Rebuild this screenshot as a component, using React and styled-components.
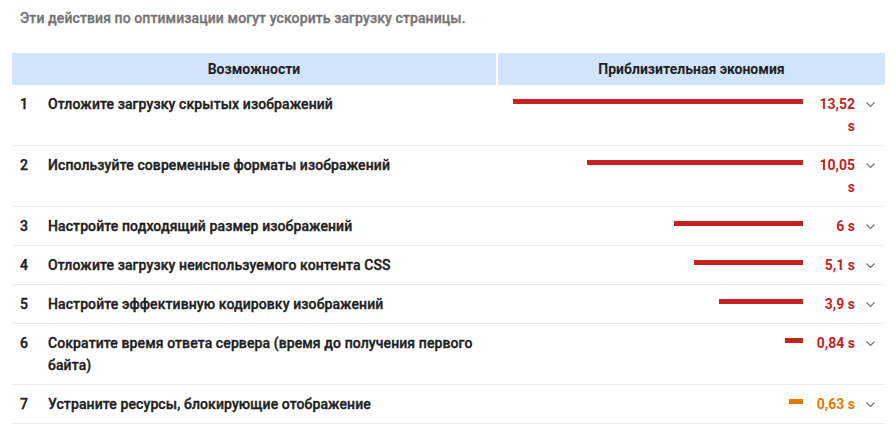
import React from "react";
import styled, { createGlobalStyle } from "styled-components";

const GlobalStyle = createGlobalStyle`
  body {
    margin: 0;
    background: #ffffff;
    font-family: Roboto, "Liberation Sans", Arial, sans-serif;
  }
`;

// no medium Roboto face here, so thicken the regular one a little
const medium = `
  font-weight: 500;
  letter-spacing: 0.1px;
  -webkit-text-stroke: 0.35px currentColor;
`;

const Page = styled.div`
  width: 873px;
  padding: 8px 0 0 12px;
`;

const Intro = styled.div`
  ${medium}
  padding-left: 8px;
  font-size: 14px;
  line-height: 20px;
  color: #757575;
  margin-bottom: 25px;
`;

const HeaderRow = styled.div`
  display: grid;
  grid-template-columns: 484px 387px;
  column-gap: 2px;
`;

const HeaderCell = styled.div`
  background: #d2e3fc;
  height: 32px;
  display: flex;
  align-items: center;
  justify-content: center;
  font-size: 14px;
  font-weight: 700;
  color: #212121;
`;

const Row = styled.div`
  ${medium}
  display: grid;
  grid-template-columns: 36px 1fr 387px;
  padding: 8px 0;
  border-bottom: 1px solid #ebebeb;
  font-size: 14px;
  line-height: 22px;
  color: #212121;
`;

const Num = styled.div`
  padding-left: 8px;
`;

const Label = styled.div`
  padding-right: 20px;
`;

const Savings = styled.div`
  display: flex;
  align-items: flex-start;
`;

const BarTrack = styled.div`
  flex: 1;
  display: flex;
  justify-content: flex-end;
`;

const Bar = styled.div`
  height: 5px;
  margin-top: 6px;
  background: ${({ $tone }) => ($tone === "warn" ? "#e67700" : "#c5221f")};
`;

const Value = styled.div`
  width: 44px;
  margin-left: 8px;
  text-align: right;
  font-weight: 700;
  letter-spacing: 0;
  -webkit-text-stroke: 0;
  color: ${({ $tone }) => ($tone === "warn" ? "#e67700" : "#c5221f")};
`;

const Chevron = styled.div`
  width: 30px;
  height: 22px;
  display: flex;
  align-items: center;
  justify-content: center;
  color: #757575;
`;

const items = [
  { id: 1, label: "Отложите загрузку скрытых изображений", value: 13.52, text: "13,52 s" },
  { id: 2, label: "Используйте современные форматы изображений", value: 10.05, text: "10,05 s" },
  { id: 3, label: "Настройте подходящий размер изображений", value: 6, text: "6 s" },
  { id: 4, label: "Отложите загрузку неиспользуемого контента CSS", value: 5.1, text: "5,1 s" },
  { id: 5, label: "Настройте эффективную кодировку изображений", value: 3.9, text: "3,9 s" },
  { id: 6, label: "Сократите время ответа сервера (время до получения первого байта)", value: 0.84, text: "0,84 s" },
  { id: 7, label: "Устраните ресурсы, блокирующие отображение", value: 0.63, text: "0,63 s", tone: "warn" },
];

const PX_PER_SECOND = 290 / 13.52;

const ChevronIcon = () => (
  <svg width="9" height="5" viewBox="0 0 9 5">
    <path d="M0.5 0.5l4 4 4-4" fill="none" stroke="currentColor" strokeWidth="1.2" />
  </svg>
);

export default function App() {
  return (
    <Page>
      <GlobalStyle />
      <Intro>Эти действия по оптимизации могут ускорить загрузку страницы.</Intro>
      <HeaderRow>
        <HeaderCell>Возможности</HeaderCell>
        <HeaderCell>Приблизительная экономия</HeaderCell>
      </HeaderRow>
      {items.map((item) => (
        <Row key={item.id}>
          <Num>{item.id}</Num>
          <Label>{item.label}</Label>
          <Savings>
            <BarTrack>
              <Bar $tone={item.tone} style={{ width: Math.round(item.value * PX_PER_SECOND) }} />
            </BarTrack>
            <Value $tone={item.tone}>{item.text}</Value>
            <Chevron>
              <ChevronIcon />
            </Chevron>
          </Savings>
        </Row>
      ))}
    </Page>
  );
}
